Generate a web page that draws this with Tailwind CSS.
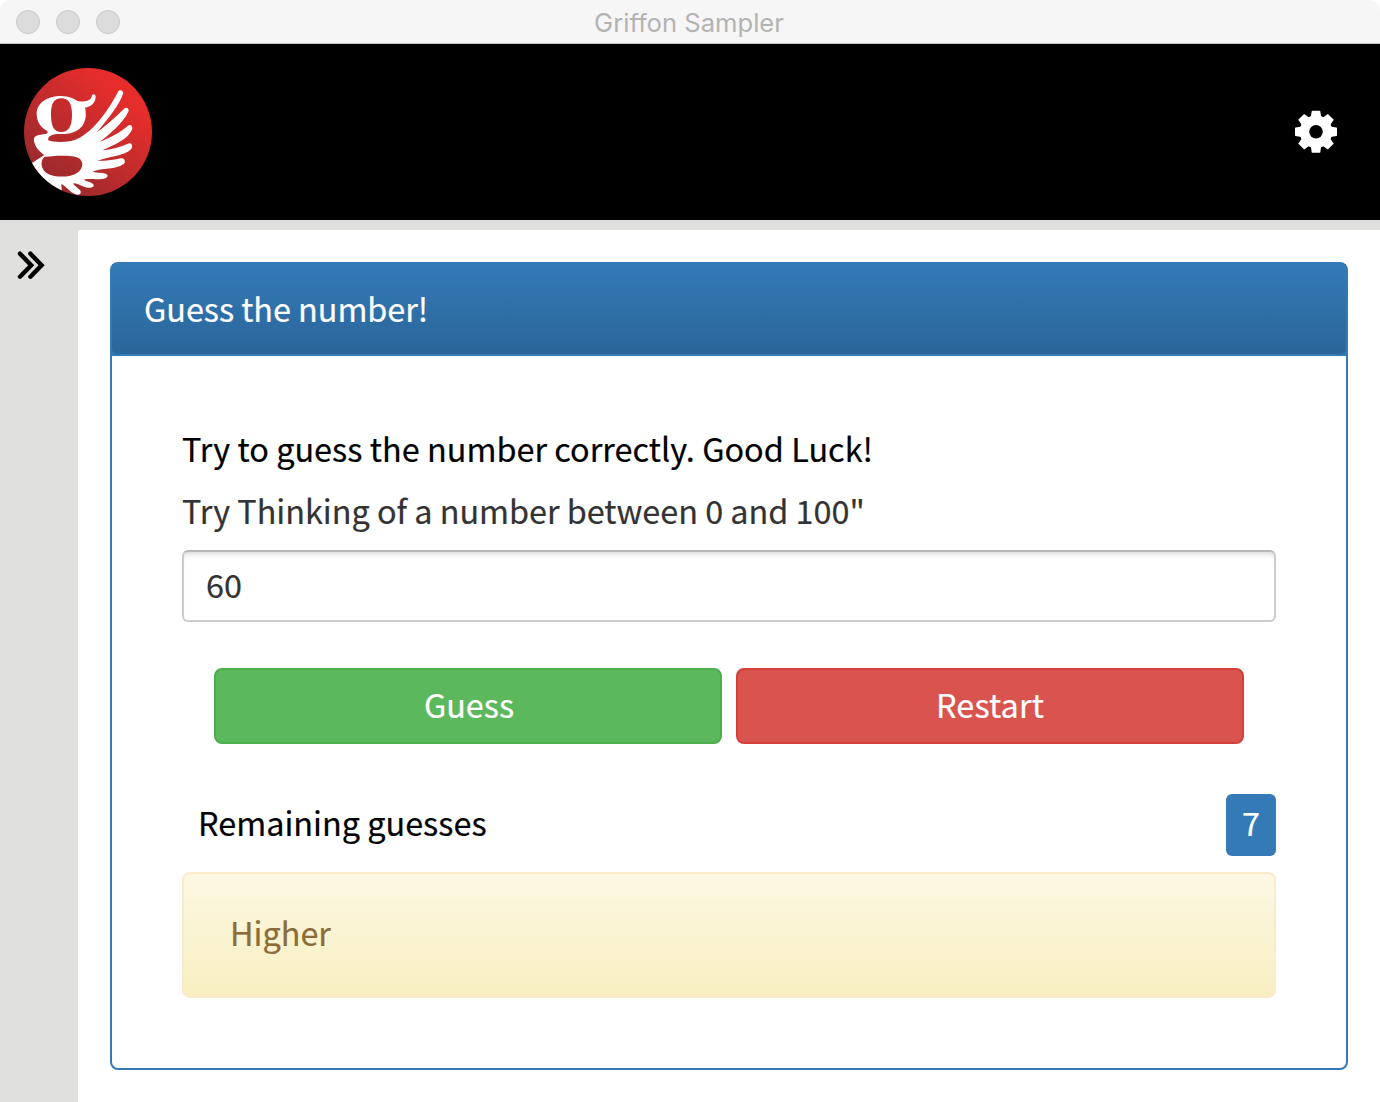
<!DOCTYPE html>
<html lang="en">
<head>
<meta charset="utf-8">
<title>Griffon Sampler</title>
<script src="https://cdn.jsdelivr.net/npm/@tailwindcss/browser@4"></script>
</head>
<body class="bg-white">
<div class="w-[1380px] h-[1102px] flex flex-col overflow-hidden bg-white font-['Noto_Sans_CJK_SC',sans-serif] text-[32.4px] leading-[48px] text-black [-webkit-text-stroke:0.2px]">
  <header class="h-11 shrink-0 grid grid-cols-[1fr_auto_1fr] items-center bg-[#f6f6f6] border-b border-[#c4c8c8] rounded-t-[10px] px-4">
    <div class="flex gap-4 pt-px">
      <span class="size-6 rounded-full bg-[#dcdcdc] border border-[#c8c8c8]"></span>
      <span class="size-6 rounded-full bg-[#dcdcdc] border border-[#c8c8c8]"></span>
      <span class="size-6 rounded-full bg-[#dcdcdc] border border-[#c8c8c8]"></span>
    </div>
    <h1 class="font-[Inter,sans-serif] text-[25.6px] leading-8 text-[#b3b3b3] pt-[3px] pr-0.5 [-webkit-text-stroke:0px]">Griffon Sampler</h1>
  </header>
  <div class="h-44 shrink-0 bg-black flex items-center justify-between pl-6 pr-[42px]">
    <svg class="size-32" viewBox="30 30 384 384">
      <defs>
        <linearGradient id="red" x1="0.75" y1="0.2" x2="0.2" y2="0.85"><stop offset="0" stop-color="#e62d2b"/><stop offset="1" stop-color="#9c2a2d"/></linearGradient>
        <clipPath id="disc"><circle cx="222" cy="222" r="192"/></clipPath>
      </defs>
      <g clip-path="url(#disc)">
        <rect x="30" y="30" width="384" height="384" fill="url(#red)"/>
        <path fill="#fff" fill-rule="evenodd" d="M142 114C164 114 181 123 193 130C210 132 230 128 233 116C234 106 245 107 245 117C244 136 229 147 213 149C222 186 207 225 150 228C95 231 68 201 68 168C68 135 99 114 142 114ZM142 121C120 121 111 137 111 170C111 204 120 222 142 222C164 222 174 204 174 170C174 137 164 121 142 121Z"/>
        <path fill="#fff" fill-rule="evenodd" d="M100 214L130 228C107 231 101 237 103 247C115 253 147 254 172 249C210 240 245 204 268 172C289 143 302 121 312 101C318 92 329 98 327 107C319 135 282 184 247 224C275 203 306 176 330 152C337 145 347 151 343 161C327 194 289 228 256 252C286 240 318 224 342 203C350 197 358 205 354 215C341 245 299 261 264 277C293 274 320 267 342 257C352 252 358 263 352 273C331 295 282 295 249 309C276 309 303 305 321 301C331 299 336 310 330 317C306 336 264 328 235 341C250 345 264 343 275 347C285 351 281 361 269 362C248 366 229 361 209 365C219 371 229 370 237 378C243 385 235 391 223 389C207 389 194 375 178 376C181 386 195 390 200 400C202 408 194 413 183 408C166 402 157 385 142 378L144 410L30 420L30 330L55 314L91 291C73 279 58 258 60 242C63 229 82 232 101 226ZM91 297C77 309 81 336 101 347C124 359 169 359 190 344C208 331 210 311 194 300C172 289 112 294 91 297Z"/>
      </g>
    </svg>
    <svg class="size-[44px]" viewBox="-22 -21.7 44 44" fill="#fff">
      <defs><path id="tooth" d="M-6.6-13.5L-5-15.9L-4.3-20.5Q-4.1-21-3.5-21H3.5Q4.1-21 4.3-20.5L5-15.9L6.6-13.5V0H-6.6Z"/></defs>
      <mask id="hole"><rect x="-22" y="-22" width="44" height="44" fill="#fff"/><circle r="6.8" fill="#000"/></mask>
      <g mask="url(#hole)">
        <circle r="16.2"/>
        <use href="#tooth"/><use href="#tooth" transform="rotate(45)"/><use href="#tooth" transform="rotate(90)"/><use href="#tooth" transform="rotate(135)"/><use href="#tooth" transform="rotate(180)"/><use href="#tooth" transform="rotate(225)"/><use href="#tooth" transform="rotate(270)"/><use href="#tooth" transform="rotate(315)"/>
      </g>
    </svg>
  </div>
  <div class="flex-1 flex bg-[#e0e0de] pt-2.5">
    <aside class="w-[78px] shrink-0 pl-4 pt-5">
      <svg class="w-[30px] h-[30px]" viewBox="0 0 30 30" fill="none" stroke="#000" stroke-width="4.4" stroke-linecap="round" stroke-linejoin="miter"><path d="M4 3.7L15.2 15.2L4 26.7M14.4 3.7L25.6 15.2L14.4 26.7"/></svg>
    </aside>
    <main class="flex-1 bg-white px-8 py-8">
      <section class="h-[808px] border-2 border-[#337ab7] rounded-[8px] flex flex-col">
        <div class="h-[92px] shrink-0 bg-[#337ab7] pb-0.5">
          <div class="h-[90px] rounded-[5px] bg-linear-to-b from-[#337ab7] to-[#2b669a] pl-8 pt-5 text-white tracking-[-0.05px]">Guess the number!</div>
        </div>
        <div class="px-[70px] pt-[68px] flex flex-col">
          <p class="h-[62px] tracking-[0.025px]">Try to guess the number correctly. Good Luck!</p>
          <label class="h-[62px] text-[#333] tracking-[-0.02px]">Try Thinking of a number between 0 and 100"</label>
          <div class="h-[72px] mt-0.5 border-2 border-[#ccc] border-t-[#b8b8b8] rounded-[6px] px-[22px] pt-2 text-[#333] shadow-[inset_0_6px_6px_-5px_rgba(0,0,0,0.2)]">60</div>
          <div class="mt-[46px] px-8 grid grid-cols-2 gap-3.5 text-center text-white">
            <button class="h-[76px] rounded-[8px] border-2 border-[#4cae4c] bg-[#5cb85c] pb-1 pl-0.5">Guess</button>
            <button class="h-[76px] rounded-[8px] border-2 border-[#d43f3a] bg-[#d9534f] pb-1 tracking-[0.15px]">Restart</button>
          </div>
          <div class="mt-[50px] h-[62px] flex justify-between pl-4">
            <span class="pt-1">Remaining guesses</span>
            <span class="w-[50px] h-[62px] rounded-[6px] bg-[#337ab7] text-white text-center pt-1">7</span>
          </div>
          <div class="mt-4 h-[126px] rounded-[8px] border-2 border-[#faebcc] bg-linear-to-b from-[#fcf8e3] to-[#f8efc0] bg-origin-border pl-[46px] pt-[34px] text-[#8a6d3b]">Higher</div>
        </div>
      </section>
    </main>
  </div>
</div>
</body>
</html>
